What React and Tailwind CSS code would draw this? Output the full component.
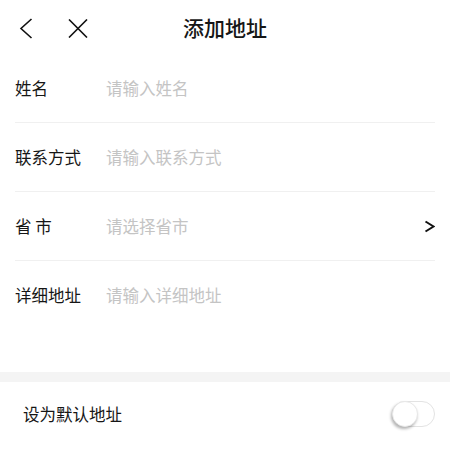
import React from "react";

const font = { fontFamily: '"Noto Sans CJK SC", "Noto Sans", sans-serif' };

function Field({ label, placeholder, arrow, last }) {
  return (
    <div className={`flex h-[69px] items-center ${last ? "" : "border-b border-[#f0f0f0]"}`}>
      <div className="w-[91px] shrink-0 text-[16.5px] text-[#161616]">{label}</div>
      <div className="flex-1 text-[16.5px] text-[#c4c4c4]">{placeholder}</div>
      {arrow && (
        <svg width="11" height="13" viewBox="0 0 11 13">
          <path d="M1.5 1.5 L9.5 6.5 L1.5 11.5" fill="none" stroke="#111" strokeWidth="2" />
        </svg>
      )}
    </div>
  );
}

export default function App() {
  return (
    <div className="w-[450px] h-[449px] overflow-hidden bg-white" style={font}>
      <div className="relative flex h-[54px] items-center justify-center">
        <div className="absolute left-[19px] top-[18px] flex items-center gap-[35px]">
          <svg width="14" height="21" viewBox="0 0 14 21">
            <path d="M12.5 1 L2 10.5 L12.5 20" fill="none" stroke="#111" strokeWidth="1.6" />
          </svg>
          <svg width="20" height="19" viewBox="0 0 20 19">
            <path d="M1 0.5 L19 18.5 M19 0.5 L1 18.5" fill="none" stroke="#111" strokeWidth="1.6" />
          </svg>
        </div>
        <div className="text-[21px] font-medium text-[#161616] leading-none">添加地址</div>
      </div>
      <div className="mx-[15px]">
        <Field label="姓名" placeholder="请输入姓名" />
        <Field label="联系方式" placeholder="请输入联系方式" />
        <Field label="省 市" placeholder="请选择省市" arrow />
        <div className="h-[111px]">
          <Field label="详细地址" placeholder="请输入详细地址" last />
        </div>
      </div>
      <div className="h-[10px] bg-[#f4f4f4]" />
      <div className="flex h-[64px] items-center justify-between pl-[23px] pr-[15px]">
        <div className="text-[16.5px] text-[#161616]">设为默认地址</div>
        <div className="relative h-[26px] w-[43px] rounded-full border border-[#e3e3e3] bg-white">
          <div className="absolute left-[-1px] top-[-1px] h-[26px] w-[26px] rounded-full bg-white shadow-[-1px_2px_3px_rgba(0,0,0,0.3)] border border-[#e8e8e8]" />
        </div>
      </div>
    </div>
  );
}
